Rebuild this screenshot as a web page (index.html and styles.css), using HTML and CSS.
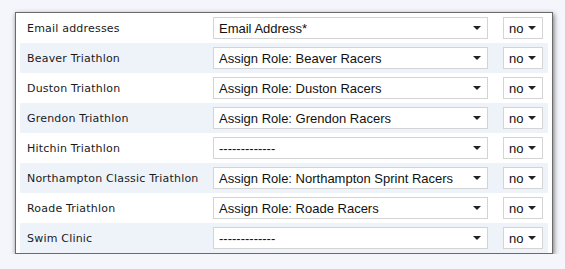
FILE: index.html
```html
<!DOCTYPE html>
<html lang="en">
<head>
    <title>Role mapping</title>
    <link rel="stylesheet" href="styles.css">
</head>
<body>
    <div class="panel">
        <div class="row">
            <div class="label">Email addresses</div>
            <div class="select wide"><span>Email Address*</span><i class="arrow"></i></div>
            <div class="select yn"><span>no</span><i class="arrow"></i></div>
        </div>
        <div class="row alt">
            <div class="label">Beaver Triathlon</div>
            <div class="select wide"><span>Assign Role: Beaver Racers</span><i class="arrow"></i></div>
            <div class="select yn"><span>no</span><i class="arrow"></i></div>
        </div>
        <div class="row">
            <div class="label">Duston Triathlon</div>
            <div class="select wide"><span>Assign Role: Duston Racers</span><i class="arrow"></i></div>
            <div class="select yn"><span>no</span><i class="arrow"></i></div>
        </div>
        <div class="row alt">
            <div class="label">Grendon Triathlon</div>
            <div class="select wide"><span>Assign Role: Grendon Racers</span><i class="arrow"></i></div>
            <div class="select yn"><span>no</span><i class="arrow"></i></div>
        </div>
        <div class="row">
            <div class="label">Hitchin Triathlon</div>
            <div class="select wide"><span>-------------</span><i class="arrow"></i></div>
            <div class="select yn"><span>no</span><i class="arrow"></i></div>
        </div>
        <div class="row alt">
            <div class="label">Northampton Classic Triathlon</div>
            <div class="select wide"><span>Assign Role: Northampton Sprint Racers</span><i class="arrow"></i></div>
            <div class="select yn"><span>no</span><i class="arrow"></i></div>
        </div>
        <div class="row">
            <div class="label">Roade Triathlon</div>
            <div class="select wide"><span>Assign Role: Roade Racers</span><i class="arrow"></i></div>
            <div class="select yn"><span>no</span><i class="arrow"></i></div>
        </div>
        <div class="row alt">
            <div class="label">Swim Clinic</div>
            <div class="select wide"><span>-------------</span><i class="arrow"></i></div>
            <div class="select yn"><span>no</span><i class="arrow"></i></div>
        </div>
    </div>
</body>
</html>
```

FILE: styles.css
```css
body {
    margin: 0;
    background-color: #f4f6fb;
    font-family: "DejaVu Sans", Verdana, sans-serif;
}

.panel {
    width: 528px;
    margin: 12px 0 0 15px;
    padding: 0 4px;
    background: white;
    border: 1px solid #6a6a6a;
    box-shadow: 1px 2px 5px rgba(0, 0, 0, 0.55);
}

.row {
    display: grid;
    grid-template-columns: 193px 275px 55px;
    align-items: center;
    height: 30px;
}

.row.alt {
    background-color: #eef3fa;
}

.label {
    padding-left: 7px;
    font-size: 11px;
    letter-spacing: 0.2px;
    color: #1a1a1a;
}

.select {
    display: flex;
    align-items: center;
    justify-content: space-between;
    box-sizing: border-box;
    height: 22px;
    padding: 0 6px 0 5px;
    background: white;
    border: 1px solid #d4d4d4;
    font-family: "Liberation Sans", Arial, sans-serif;
    font-size: 13px;
    color: #111;
}

.select.yn {
    margin-left: 15px;
}

.arrow {
    width: 0;
    height: 0;
    border-left: 4px solid transparent;
    border-right: 4px solid transparent;
    border-top: 4px solid #222;
}
```
